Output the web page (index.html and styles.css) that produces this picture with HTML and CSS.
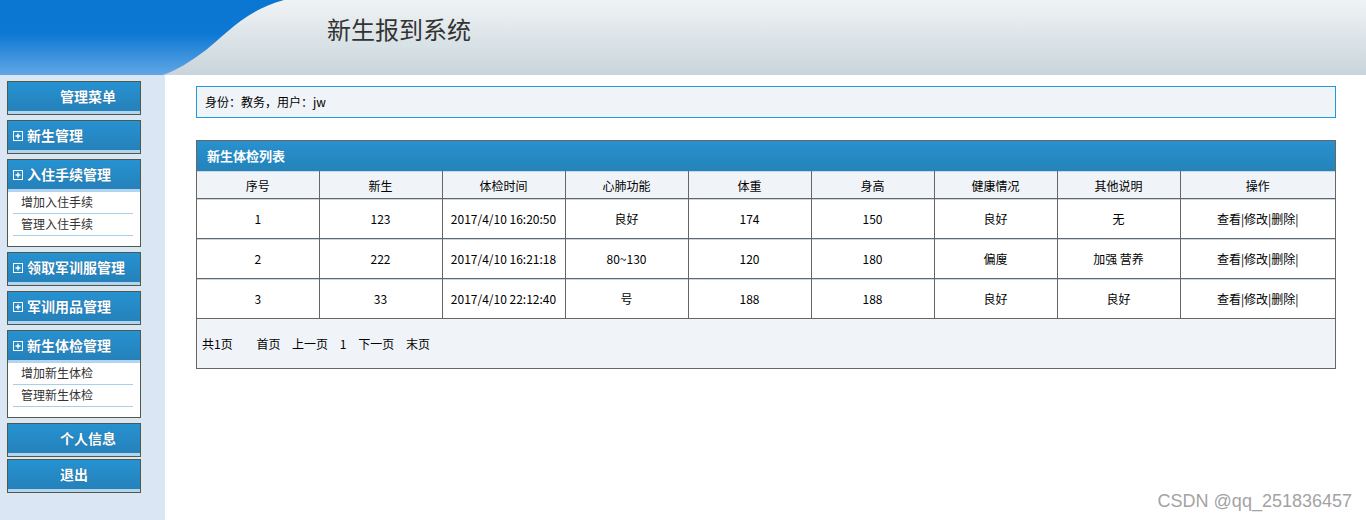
FILE: index.html
```html
<!DOCTYPE html>
<html lang="zh-CN">
<head>
    <meta charset="UTF-8">
    <title>新生报到系统</title>
    <link rel="stylesheet" href="styles.css">
</head>
<body>
    <div class="header">
        <svg class="header-wave" width="320" height="75" viewBox="0 0 320 75">
            <defs>
                <linearGradient id="waveBlue" x1="0" y1="0" x2="0" y2="1">
                    <stop offset="0" stop-color="#0a76d2"/>
                    <stop offset="0.45" stop-color="#0d79d4"/>
                    <stop offset="1" stop-color="#62a6e4"/>
                </linearGradient>
            </defs>
            <path d="M0,0 H284 C246,10 226,34 206,50 C190,62 177,70 163,75 H0 Z" fill="url(#waveBlue)"/>
        </svg>
        <h1 class="title">新生报到系统</h1>
    </div>

    <div class="layout">
        <div class="sidebar">
            <div class="menu-box">
                <div class="menu-head plain">管理菜单</div>
            </div>
            <div class="menu-box">
                <div class="menu-head"><svg class="plus" width="10" height="10" viewBox="0 0 10 10"><rect x="0.5" y="0.5" width="9" height="9" fill="none" stroke="#fff"/><path d="M2.5,5 H7.5 M5,2.5 V7.5" stroke="#fff" stroke-width="1.4"/></svg>新生管理</div>
            </div>
            <div class="menu-box">
                <div class="menu-head"><svg class="plus" width="10" height="10" viewBox="0 0 10 10"><rect x="0.5" y="0.5" width="9" height="9" fill="none" stroke="#fff"/><path d="M2.5,5 H7.5 M5,2.5 V7.5" stroke="#fff" stroke-width="1.4"/></svg>入住手续管理</div>
                <ul class="menu-list">
                    <li>增加入住手续</li>
                    <li>管理入住手续</li>
                </ul>
            </div>
            <div class="menu-box">
                <div class="menu-head"><svg class="plus" width="10" height="10" viewBox="0 0 10 10"><rect x="0.5" y="0.5" width="9" height="9" fill="none" stroke="#fff"/><path d="M2.5,5 H7.5 M5,2.5 V7.5" stroke="#fff" stroke-width="1.4"/></svg>领取军训服管理</div>
            </div>
            <div class="menu-box">
                <div class="menu-head"><svg class="plus" width="10" height="10" viewBox="0 0 10 10"><rect x="0.5" y="0.5" width="9" height="9" fill="none" stroke="#fff"/><path d="M2.5,5 H7.5 M5,2.5 V7.5" stroke="#fff" stroke-width="1.4"/></svg>军训用品管理</div>
            </div>
            <div class="menu-box">
                <div class="menu-head"><svg class="plus" width="10" height="10" viewBox="0 0 10 10"><rect x="0.5" y="0.5" width="9" height="9" fill="none" stroke="#fff"/><path d="M2.5,5 H7.5 M5,2.5 V7.5" stroke="#fff" stroke-width="1.4"/></svg>新生体检管理</div>
                <ul class="menu-list">
                    <li>增加新生体检</li>
                    <li>管理新生体检</li>
                </ul>
            </div>
            <div class="menu-box tight">
                <div class="menu-head plain">个人信息</div>
            </div>
            <div class="menu-box">
                <div class="menu-head plain">退出</div>
            </div>
        </div>

        <div class="main">
            <div class="info">身份：教务，用户：jw</div>

            <div class="panel">
                <div class="panel-title">新生体检列表</div>
                <table class="grid">
                    <colgroup>
                        <col class="c first"><col class="c"><col class="c"><col class="c">
                        <col class="c"><col class="c"><col class="c"><col class="c">
                        <col>
                    </colgroup>
                    <thead>
                        <tr>
                            <th>序号</th><th>新生</th><th>体检时间</th><th>心肺功能</th><th>体重</th>
                            <th>身高</th><th>健康情况</th><th>其他说明</th><th>操作</th>
                        </tr>
                    </thead>
                    <tbody>
                        <tr>
                            <td>1</td><td>123</td><td>2017/4/10 16:20:50</td><td>良好</td><td>174</td>
                            <td>150</td><td>良好</td><td>无</td><td>查看|修改|删除|</td>
                        </tr>
                        <tr>
                            <td>2</td><td>222</td><td>2017/4/10 16:21:18</td><td>80~130</td><td>120</td>
                            <td>180</td><td>偏廋</td><td>加强 营养</td><td>查看|修改|删除|</td>
                        </tr>
                        <tr>
                            <td>3</td><td>33</td><td>2017/4/10 22:12:40</td><td>号</td><td>188</td>
                            <td>188</td><td>良好</td><td>良好</td><td>查看|修改|删除|</td>
                        </tr>
                    </tbody>
                </table>
                <div class="pager">
                    <span class="total">共1页</span>
                    <span>首页</span>
                    <span>上一页</span>
                    <span>1</span>
                    <span>下一页</span>
                    <span>末页</span>
                </div>
            </div>
        </div>
    </div>

    <div class="watermark">CSDN @qq_251836457</div>
</body>
</html>
```

FILE: styles.css
```css
body {
    margin: 0;
    font-family: "Noto Sans CJK SC", "Liberation Sans", sans-serif;
    font-size: 12px;
    color: #000;
    background: #fff;
}
.header {
    display: flex;
    align-items: flex-start;
    height: 75px;
    background: linear-gradient(#f0f3f5, #c8d5db);
}
.header-wave {
    display: block;
    flex-shrink: 0;
}
.title {
    margin: 13px 0 0 7px;
    font-size: 24px;
    font-weight: normal;
    line-height: 32px;
    color: #333;
}
.layout {
    display: flex;
    min-height: calc(100vh - 75px);
}
.sidebar {
    width: 165px;
    flex-shrink: 0;
    box-sizing: border-box;
    padding: 6px 0 0 7px;
    background: #dae6f3;
}
.menu-box {
    width: 134px;
    box-sizing: border-box;
    border: 1px solid #4f5a48;
    background: #fff;
    margin-bottom: 5px;
}
.menu-box.tight {
    margin-bottom: 2px;
}
.menu-head {
    display: flex;
    align-items: center;
    height: 27px;
    padding: 0 0 2px 5px;
    background: linear-gradient(#2692d1, #2581ba);
    border-bottom: 3px solid #b3d4ee;
    color: #fff;
    font-size: 14px;
    font-weight: bold;
    text-shadow: 0 0 1px #1a5d8c;
}
.menu-head.plain {
    padding-left: 52px;
}
.plus {
    display: block;
    margin: 2px 4px 0 0;
    flex-shrink: 0;
}
.menu-list {
    list-style: none;
    margin: 0;
    padding: 0 7px 10px 5px;
}
.menu-list li {
    height: 21px;
    line-height: 20px;
    padding-left: 8px;
    border-bottom: 1px solid #a6cfe9;
    color: #333;
    font-size: 12px;
}
.main {
    flex: 1;
    padding: 11px 30px 0 31px;
}
.info {
    height: 30px;
    line-height: 30px;
    padding-left: 8px;
    border: 1px solid #1b9bd7;
    background: #f0f4f8;
}
.panel {
    margin-top: 22px;
    border: 1px solid #666;
    background: #f0f4f8;
}
.panel-title {
    height: 30px;
    line-height: 30px;
    padding-left: 10px;
    background: linear-gradient(#2891cf, #2483b9);
    color: #fff;
    font-size: 13px;
    font-weight: bold;
}
.grid {
    width: 100%;
    border-collapse: collapse;
    table-layout: fixed;
}
.grid col.c {
    width: 123px;
}
.grid col.first {
    width: 122px;
}
.grid th,
.grid td {
    text-align: center;
    font-weight: normal;
    border-right: 1px solid #666;
    border-bottom: 1px solid #666;
    padding: 0;
}
.grid th:last-child,
.grid td:last-child {
    border-right: none;
}
.grid th {
    height: 26px;
    background: #f0f4f8;
    border-top: 1px solid #c9d7e3;
}
.grid td {
    height: 39px;
    background: #fff;
    box-shadow: inset 0 1px 0 #c6d6e4;
}
.pager {
    height: 49px;
    line-height: 49px;
    padding-left: 5px;
}
.pager span {
    margin-right: 9px;
}
.pager .total {
    margin-right: 21px;
}
.watermark {
    position: absolute;
    right: 14px;
    bottom: 8px;
    font-family: "Liberation Sans", Arial, sans-serif;
    font-size: 18px;
    color: #a3a3a3;
}
```
